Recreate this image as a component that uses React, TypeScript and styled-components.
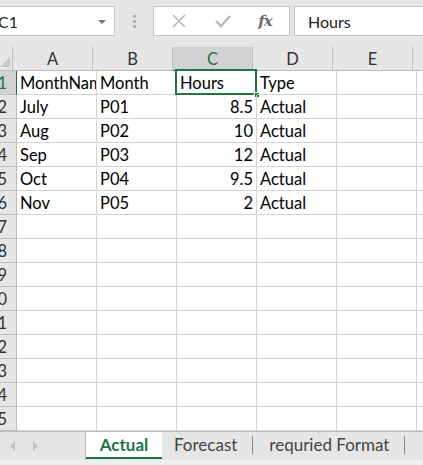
import React from 'react';
import styled, { createGlobalStyle } from 'styled-components';

const GlobalStyle = createGlobalStyle`
  html, body {
    margin: 0;
    padding: 0;
    background: #e6e6e6;
    overflow: hidden;
  }
  * {
    box-sizing: border-box;
  }
`;

const GRID_LINE = '#d4d4d4';
const GREEN = '#217346';

const Window = styled.div`
  width: 423px;
  height: 465px;
  display: flex;
  flex-direction: column;
  overflow: hidden;
  font-family: Lato, 'Open Sans', sans-serif;
  background: #e6e6e6;
`;

const FormulaBar = styled.div`
  height: 47px;
  display: flex;
  align-items: flex-start;
  padding-top: 6px;
  margin-left: -10px;
`;

const NameBox = styled.div`
  width: 125px;
  height: 30px;
  background: #fff;
  border: 1px solid #c6c6c6;
  display: flex;
  align-items: center;
  justify-content: space-between;
  padding: 0 8px 0 7px;
  font-size: 16px;
  color: #222;
`;

const DropArrow = styled.span`
  width: 0;
  height: 0;
  border-left: 4px solid transparent;
  border-right: 4px solid transparent;
  border-top: 4px solid #777;
  margin-top: 1px;
`;

const Grip = styled.div`
  width: 38px;
  height: 30px;
  display: flex;
  flex-direction: column;
  align-items: center;
  justify-content: center;
  gap: 2px;
`;

const GripDot = styled.span`
  width: 3px;
  height: 3px;
  background: #b4b4b4;
`;

const FxBox = styled.div`
  width: 137px;
  height: 30px;
  background: #fff;
  border: 1px solid #c6c6c6;
  display: flex;
  align-items: center;
  justify-content: space-around;
  padding: 0 4px;
`;

const FxLabel = styled.span`
  font-family: 'DejaVu Serif', 'Liberation Serif', serif;
  font-style: italic;
  font-weight: bold;
  font-size: 15px;
  color: #6a6a6a;
  letter-spacing: -1px;
`;

const FormulaInput = styled.div`
  flex: 1;
  height: 30px;
  margin-left: 4px;
  background: #fff;
  border: 1px solid #c6c6c6;
  border-right: none;
  display: flex;
  align-items: center;
  padding-left: 13px;
  font-size: 16px;
  color: #222;
`;

const Sheet = styled.div`
  display: flex;
  flex-direction: column;
  background: #fff;
`;

const Row = styled.div`
  display: flex;
  height: 24px;
`;

const Corner = styled.div`
  width: 17px;
  height: 24px;
  background: #e6e6e6;
  border-right: 1px solid #bdbdbd;
  border-bottom: 1px solid #bdbdbd;
  display: flex;
  align-items: flex-end;
  justify-content: flex-end;
  padding: 0 2px 3px 0;
`;

const ColHeader = styled.div<{ $active?: boolean; $narrow?: boolean }>`
  width: ${(p) => (p.$narrow ? '40px' : '80px')};
  flex-shrink: 0;
  height: 24px;
  background: ${(p) => (p.$active ? '#d2d2d2' : '#e6e6e6')};
  color: ${(p) => (p.$active ? GREEN : '#333')};
  border-right: 1px solid #bdbdbd;
  border-bottom: 1px solid ${(p) => (p.$active ? GREEN : '#bdbdbd')};
  display: flex;
  align-items: center;
  justify-content: center;
  font-size: 16.5px;
`;

const RowHeader = styled.div<{ $active?: boolean }>`
  width: 17px;
  flex-shrink: 0;
  height: 24px;
  background: ${(p) => (p.$active ? '#d2d2d2' : '#e6e6e6')};
  color: ${(p) => (p.$active ? GREEN : '#333')};
  border-right: 1px solid ${(p) => (p.$active ? GREEN : '#bdbdbd')};
  border-bottom: 1px solid #bdbdbd;
  display: flex;
  align-items: center;
  justify-content: flex-end;
  padding-right: 9px;
  overflow: hidden;
  font-size: 16.5px;
`;

const Cell = styled.div<{ $align?: 'left' | 'right'; $narrow?: boolean }>`
  position: relative;
  width: ${(p) => (p.$narrow ? '40px' : '80px')};
  flex-shrink: 0;
  height: 24px;
  border-right: 1px solid ${GRID_LINE};
  border-bottom: 1px solid ${GRID_LINE};
  display: flex;
  align-items: center;
  justify-content: ${(p) => (p.$align === 'right' ? 'flex-end' : 'flex-start')};
  padding: 0 3px;
  font-size: 16.5px;
  color: #000;
  white-space: nowrap;
  overflow: hidden;
`;

const ActiveCell = styled(Cell)`
  overflow: visible;
`;

const SelectionFrame = styled.div`
  position: absolute;
  left: -2px;
  top: -2px;
  right: -1px;
  bottom: -1px;
  border: 2px solid ${GREEN};
  pointer-events: none;
`;

const FillHandle = styled.div`
  position: absolute;
  right: -4px;
  bottom: -4px;
  width: 6px;
  height: 6px;
  background: ${GREEN};
  border: 1px solid #fff;
`;

const TabBar = styled.div`
  height: 29px;
  display: flex;
  background: #e6e6e6;
  border-top: 1px solid #bdbdbd;
`;

const NavArea = styled.div`
  width: 86px;
  display: flex;
  align-items: center;
  gap: 18px;
  padding-left: 10px;
  border-right: 1px solid #bdbdbd;
`;

const NavArrow = styled.span<{ $dir: 'left' | 'right' }>`
  width: 0;
  height: 0;
  border-top: 5px solid transparent;
  border-bottom: 5px solid transparent;
  ${(p) =>
    p.$dir === 'left'
      ? 'border-right: 5px solid #c4c4c4;'
      : 'border-left: 5px solid #c4c4c4;'}
`;

const Tab = styled.div<{ $active?: boolean }>`
  height: 27px;
  display: flex;
  align-items: center;
  padding: 0 15px 0 12px;
  font-size: 17px;
  background: ${(p) => (p.$active ? '#fff' : 'transparent')};
  color: ${(p) => (p.$active ? GREEN : '#444')};
  font-weight: ${(p) => (p.$active ? 700 : 400)};
  border-bottom: 2px solid ${(p) => (p.$active ? GREEN : 'transparent')};
`;

const TabActive = styled(Tab)`
  width: 76px;
  padding: 0;
  justify-content: center;
`;

const TabSep = styled.span`
  width: 1px;
  height: 18px;
  background: #888;
  align-self: center;
  margin: 0 4px 2px 0;
`;

const StatusStrip = styled.div`
  flex: 1;
  background: #eeeeee;
`;

type CellValue = string | number;

const columns = ['A', 'B', 'C', 'D', 'E'];

const data: CellValue[][] = [
  ['MonthName', 'Month', 'Hours', 'Type'],
  ['July', 'P01', 8.5, 'Actual'],
  ['Aug', 'P02', 10, 'Actual'],
  ['Sep', 'P03', 12, 'Actual'],
  ['Oct', 'P04', 9.5, 'Actual'],
  ['Nov', 'P05', 2, 'Actual'],
];

const TOTAL_ROWS = 15;

const CrossIcon = () => (
  <svg width="16" height="16" viewBox="0 0 16 16">
    <path d="M2 2 L14 14 M14 2 L2 14" stroke="#b8b8b8" strokeWidth="1.6" fill="none" />
  </svg>
);

const CheckIcon = () => (
  <svg width="18" height="16" viewBox="0 0 18 16">
    <path d="M2 8 L7 13 L16 3" stroke="#b8b8b8" strokeWidth="2.4" fill="none" />
  </svg>
);

const App: React.FC = () => {
  const rows = Array.from({ length: TOTAL_ROWS }, (_, i) => data[i] || []);

  return (
    <Window>
      <GlobalStyle />
      <FormulaBar>
        <NameBox>
          <span>C1</span>
          <DropArrow />
        </NameBox>
        <Grip>
          <GripDot />
          <GripDot />
          <GripDot />
        </Grip>
        <FxBox>
          <CrossIcon />
          <CheckIcon />
          <FxLabel>fx</FxLabel>
        </FxBox>
        <FormulaInput>Hours</FormulaInput>
      </FormulaBar>

      <Sheet>
        <Row>
          <Corner>
            <svg width="10" height="10" viewBox="0 0 10 10">
              <polygon points="10,0 10,10 0,10" fill="#c8c8c8" />
            </svg>
          </Corner>
          {columns.map((c) => (
            <ColHeader key={c} $active={c === 'C'}>
              {c}
            </ColHeader>
          ))}
          <ColHeader $narrow />
        </Row>
        {rows.map((row, r) => (
          <Row key={r}>
            <RowHeader $active={r === 0}>{r + 1}</RowHeader>
            {columns.map((c, ci) => {
              const v = row[ci];
              const align = typeof v === 'number' ? 'right' : 'left';
              if (r === 0 && c === 'C') {
                return (
                  <ActiveCell key={c} $align={align}>
                    {v}
                    <SelectionFrame />
                    <FillHandle />
                  </ActiveCell>
                );
              }
              return (
                <Cell key={c} $align={align}>
                  {v}
                </Cell>
              );
            })}
            <Cell $narrow />
          </Row>
        ))}
      </Sheet>

      <TabBar>
        <NavArea>
          <NavArrow $dir="left" />
          <NavArrow $dir="right" />
        </NavArea>
        <TabActive $active>Actual</TabActive>
        <Tab>Forecast</Tab>
        <TabSep />
        <Tab>requried Format</Tab>
        <TabSep />
      </TabBar>
      <StatusStrip />
    </Window>
  );
};

export default App;
